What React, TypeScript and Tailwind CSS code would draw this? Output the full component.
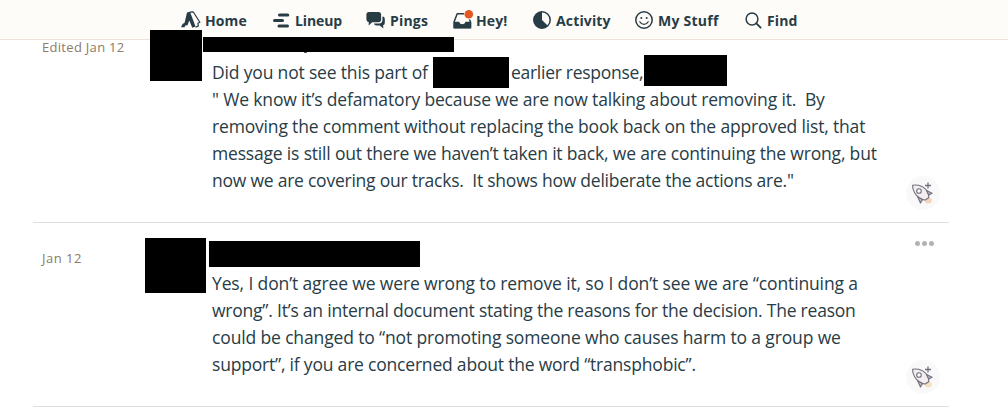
import type { ReactNode } from "react";

type NavItem = {
  label: string;
  icon: ReactNode;
  // widths of the item and of its icon slot
  size: string;
  slot: string;
  tracking: string;
};

const navItems: NavItem[] = [
  {
    label: "Home",
    size: "w-[92px]",
    slot: "w-[24px]",
    tracking: "tracking-[0.1px]",
    icon: (
      <svg width="20" height="18" viewBox="0 0 20 18" fill="none">
        <path d="M6 1.5 9 .8l5.5 14.7-3.2 1.3-3-7.3-1.8 4.8-2.2.1-.8 1.8H0l1.6-3.2 2-1.3z" fill="#283c46" />
        <path d="M9 1.1 12.2.8l6.6 10.4-1.9 1.1.5 2.5-2.9 1.5" stroke="#283c46" strokeWidth="1.2" />
      </svg>
    ),
  },
  {
    label: "Lineup",
    size: "w-[93px]",
    slot: "w-[22px]",
    tracking: "tracking-[-0.1px]",
    icon: (
      <svg width="17" height="15" viewBox="0 0 17 15" stroke="#283c46" strokeWidth="3" strokeLinecap="round">
        <path d="M6.5 2h8.3M1.5 7.5h8M6 13h8.5" />
      </svg>
    ),
  },
  {
    label: "Pings",
    size: "w-[87px]",
    slot: "w-[24px]",
    tracking: "tracking-[0.2px]",
    icon: (
      <svg width="20" height="17" viewBox="0 0 20 17" fill="#283c46">
        <path d="M3 0h9.5a2.6 2.6 0 0 1 2.6 2.6v5a2.6 2.6 0 0 1-2.6 2.6H6.2L2.6 13.5l.2-3.3A2.6 2.6 0 0 1 .4 7.6v-5A2.6 2.6 0 0 1 3 0z" />
        <path d="M16.4 4.5a2.4 2.4 0 0 1 2.4 2.4v4a2.4 2.4 0 0 1-1.7 2.3l.3 3.3-3.7-3.1H10a2.4 2.4 0 0 1-2.1-1.9h5a3.4 3.4 0 0 0 3.5-3.4z" />
      </svg>
    ),
  },
  {
    label: "Hey!",
    size: "w-[80px]",
    slot: "w-[23px]",
    tracking: "tracking-[0.1px]",
    icon: (
      <svg width="21" height="21" viewBox="0 0 21 21" fill="none">
        <path d="M11 3.8H4.2L1 12v5.8h16.6V12l-1.2-2.5" stroke="#283c46" strokeWidth="1.5" strokeLinejoin="round" />
        <path d="M1 11.7h5.2c.6 1.8 1.7 2.5 3.1 2.5s2.5-.7 3.1-2.5h5.2v6.6H1z" fill="#283c46" />
        <circle cx="15.8" cy="4.3" r="4.3" fill="#e55722" />
      </svg>
    ),
  },
  {
    label: "Activity",
    size: "w-[102px]",
    slot: "w-[23px]",
    tracking: "tracking-[0.15px]",
    icon: (
      <svg width="18" height="18" viewBox="0 0 18 18">
        <circle cx="9" cy="9" r="8.2" fill="none" stroke="#283c46" strokeWidth="1.5" />
        <path d="M9 .8V9l5.8 5.8A8.2 8.2 0 1 1 9 .8z" fill="#283c46" />
      </svg>
    ),
  },
  {
    label: "My Stuff",
    size: "w-[110px]",
    slot: "w-[23px]",
    tracking: "tracking-[0.25px]",
    icon: (
      <svg width="18" height="18" viewBox="0 0 18 18" fill="none" stroke="#283c46">
        <circle cx="9" cy="9" r="8.2" strokeWidth="1.5" />
        <path d="M4.8 10.7c1 1.8 2.4 2.7 4.2 2.7s3.2-.9 4.2-2.7" strokeWidth="1.3" strokeLinecap="round" />
        <circle cx="6.3" cy="6.9" r="1" fill="#283c46" stroke="none" />
        <circle cx="11.7" cy="6.9" r="1" fill="#283c46" stroke="none" />
      </svg>
    ),
  },
  {
    label: "Find",
    size: "w-[60px]",
    slot: "w-[22px]",
    tracking: "tracking-[0.1px]",
    icon: (
      <svg width="17" height="17" viewBox="0 0 17 17" fill="none" stroke="#283c46" strokeWidth="1.5" strokeLinecap="round">
        <circle cx="7" cy="7" r="5.9" />
        <path d="m11.3 11.3 4.3 4.3" strokeWidth="1.9" />
      </svg>
    ),
  },
];

function BoostButton({ flame }: { flame: string }) {
  return (
    <button className="flex h-[34px] w-[34px] items-center justify-center rounded-full bg-[#faf9fa]">
      <svg width="24" height="26" viewBox="0 0 24 26" fill="none" stroke="#74717d" strokeWidth="1.1" strokeLinejoin="round">
        <path d="m15.5 18.5 2.2-1.4 3.2 2.2-.7 3.8-4.7.3-1.8-2.4z" fill={flame} stroke="none" />
        <path d="M1.6 5.2c5-.7 10.2.8 13.4 4.5 2.4 2.7 3 5.8 2.6 8.1l-3.3 2.2c-2.9 0-6.3-1.4-8.8-4.6C3.1 12.300 1.5 8.9 1.600 5.200z" fill="#f3edf0" />
        <path d="m15.5 10.5 5.6 2.8-3.500 1.800zM6.500 16.500l3 6.600 2-3.700z" fill="#b9b5bf" />
        <circle cx="8" cy="11" r="2.3" fill="#fff" />
        <path d="M17 2.500v6M14 5.500h6" strokeWidth="1.300" />
      </svg>
    </button>
  );
}

export default function App() {
  return (
    <div className="h-[411px] w-[1008px] overflow-hidden bg-white font-['Open_Sans','Noto_Sans',sans-serif] text-[#283c46]">
      <header className="h-10 border-b border-[#eee3da] bg-[#fefcf9]">
        <nav className="flex h-[39px] items-center pt-px pl-[181px]">
          {navItems.map((item) => (
            <a key={item.label} className={`flex shrink-0 items-center ${item.size}`}>
              <span className={`flex h-5 shrink-0 items-center ${item.slot}`}>{item.icon}</span>
              <span className={`pt-[2px] text-[14px] leading-5 font-bold whitespace-nowrap ${item.tracking}`}>{item.label}</span>
            </a>
          ))}
        </nav>
      </header>

      <main className="ml-[33px] w-[916px]">
        <article className="flex h-[183px] border-b border-[#dfdfdf]">
          <time className="w-[117px] shrink-0 pl-[9px] text-[13px] leading-[15px] tracking-[0.3px] text-[#8b7b68]">Edited Jan 12</time>
          <div className="relative -mt-[10px] h-[51px] w-[52px] shrink-0 bg-black" />
          <div className="relative -mt-[3px] w-[678px] shrink-0">
            <div className="ml-px h-[15px] w-[251px] bg-black" />
            <i className="absolute top-[15px] left-[102px] h-px w-[3px] bg-[#4a555b]" />
            <div className="mt-[7px] ml-[10px] text-[17.5px] leading-[27px] whitespace-pre">
              <p className="flex h-[27px]">
                <span className="w-[221px] tracking-[-0.17px]">Did you not see this part of</span>
                <span className="-mt-[2px] h-[31px] w-[76px] bg-black" />
                <span className="w-[135px] pl-[2px] tracking-[-0.28px]">earlier response,</span>
                <span className="-mt-[4px] h-[31px] w-[83px] bg-black" />
              </p>
              <p className="tracking-[-0.155px]">{'" We know it’s defamatory because we are now talking about removing it.  By'}</p>
              <p className="tracking-[-0.17px]">removing the comment without replacing the book back on the approved list, that</p>
              <p className="tracking-[-0.18px]">message is still out there we haven’t taken it back, we are continuing the wrong, but</p>
              <p className="tracking-[-0.235px]">{'now we are covering our tracks.  It shows how deliberate the actions are."'}</p>
            </div>
          </div>
          <div className="flex grow items-end justify-end pr-[9px] pb-[12px]">
            <BoostButton flame="#f6d3bf" />
          </div>
        </article>

        <article className="flex h-[184px] border-b border-[#dfdfdf]">
          <time className="w-[112px] shrink-0 pt-[28px] pl-[9px] text-[13px] leading-[15px] tracking-[0.5px] text-[#8b7b68]">Jan 12</time>
          <div className="mt-[15px] h-[55px] w-[61px] shrink-0 bg-black" />
          <div className="ml-[3px] w-[675px] shrink-0 pt-[18px]">
            <div className="h-[26px] w-[211px] bg-black" />
            <div className="mt-[3px] ml-[3px] text-[17.5px] leading-[27px] whitespace-pre">
              <p className="tracking-[-0.13px]">Yes, I don’t agree we were wrong to remove it, so I don’t see we are “continuing a</p>
              <p className="tracking-[-0.22px]">wrong”. It’s an internal document stating the reasons for the decision. The reason</p>
              <p className="tracking-[-0.14px]">could be changed to “not promoting someone who causes harm to a group we</p>
              <p className="tracking-[-0.2px]">support”, if you are concerned about the word “transphobic”.</p>
            </div>
          </div>
          <div className="flex grow flex-col items-end justify-between pt-[18px] pr-[9px] pb-[12px]">
            <div className="flex w-[34px] justify-center gap-[2px] pl-[2px]">
              <i className="size-[5px] rounded-full bg-[#b5b3b1]" />
              <i className="size-[5px] rounded-full bg-[#b5b3b1]" />
              <i className="size-[5px] rounded-full bg-[#b5b3b1]" />
            </div>
            <BoostButton flame="#f3e2bd" />
          </div>
        </article>
      </main>
    </div>
  );
}
